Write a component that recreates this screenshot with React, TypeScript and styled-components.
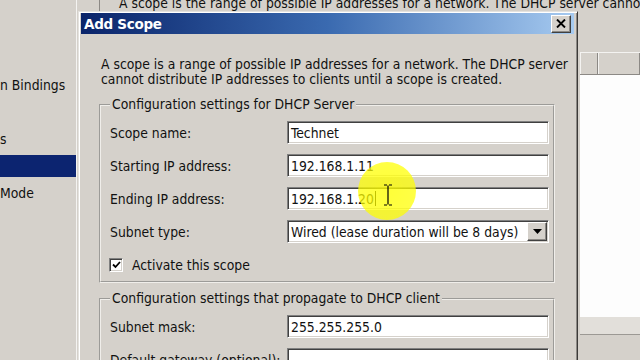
import React from 'react';
import styled, { createGlobalStyle } from 'styled-components';

const GlobalStyle = createGlobalStyle`
  html, body {
    margin: 0;
    padding: 0;
    background: #d5d1cb;
    overflow: hidden;
  }
  body {
    font-family: 'DejaVu Sans Condensed', 'DejaVu Sans', sans-serif;
    font-size: 13.8px;
    color: #111;
  }
`;

// Background console window
const Desktop = styled.div`
  position: relative;
  width: 640px;
  height: 360px;
  overflow: hidden;
  background: #d5d1cb;
`;

const BackWindow = styled.div`
  display: flex;
  width: 100%;
  height: 100%;
`;

const TreePane = styled.div`
  width: 77px;
  flex: none;
  padding-top: 74px;
  border-right: 1px solid #f4f3f1;
  box-sizing: border-box;
  display: flex;
  flex-direction: column;
  gap: 5px;
`;

const TreeItem = styled.div<{ $selected?: boolean }>`
  height: 22px;
  line-height: 22px;
  white-space: nowrap;
  overflow: hidden;
  background: ${(p) => (p.$selected ? '#0c2470' : 'transparent')};
  color: ${(p) => (p.$selected ? '#fff' : '#111')};
`;

const MainPane = styled.div`
  flex: 1;
  display: flex;
  flex-direction: column;
  min-width: 0;
`;

const TopStrip = styled.div`
  height: 11px;
  padding-left: 22px;
  display: flex;
  overflow: hidden;
`;

const TopText = styled.div`
  border-left: 1px solid #8c8985;
  padding-left: 19px;
  margin-top: -5px;
  line-height: 16px;
  white-space: nowrap;
`;

const ListPane = styled.div`
  align-self: flex-end;
  width: 60px;
  margin-top: 41px;
  flex: 1;
  display: flex;
  flex-direction: column;
`;

const ListHeader = styled.div`
  height: 21px;
  display: flex;
  background: #d5d1cb;
  border-top: 1px solid #f4f3f1;
  border-bottom: 1px solid #8c8985;
`;

const HeaderCell = styled.div<{ $w?: number }>`
  width: ${(p) => (p.$w ? `${p.$w}px` : 'auto')};
  flex: ${(p) => (p.$w ? 'none' : '1')};
  border-right: 1px solid #8c8985;
  border-left: 1px solid #f4f3f1;
`;

const ListBody = styled.div`
  height: 242px;
  background: #fdfdfd;
`;

const ListFooter = styled.div`
  height: 17px;
  background: #e2dfda;
  border-bottom: 1px solid #9c9994;
`;

// Dialog
const Dialog = styled.div`
  position: absolute;
  left: 78px;
  top: 11px;
  width: 500px;
  height: 370px;
  box-sizing: border-box;
  background: #d5d1cb;
  border-top: 1px solid #e4e2de;
  border-left: 1px solid #e4e2de;
  border-right: 1px solid #3c3a38;
  box-shadow: inset 1px 1px #ffffff, inset -1px 0 #8c8985;
  padding: 1px 3px 0 2px;
`;

const TitleBar = styled.div`
  height: 21px;
  display: flex;
  align-items: center;
  justify-content: space-between;
  padding: 0 3px 0 3px;
  background: linear-gradient(90deg, #0a246a 0%, #3a6ab0 50%, #a6caf0 100%);
`;

const Title = styled.div`
  color: #fff;
  font-family: 'DejaVu Sans', sans-serif;
  font-weight: bold;
  font-size: 13.5px;
  letter-spacing: -0.3px;
`;

const CloseButton = styled.div`
  width: 20px;
  height: 18px;
  box-sizing: border-box;
  background: #d5d1cb;
  border-top: 1px solid #fff;
  border-left: 1px solid #fff;
  border-right: 1px solid #404040;
  border-bottom: 1px solid #404040;
  box-shadow: inset -1px -1px #8c8985;
  display: flex;
  align-items: center;
  justify-content: center;
`;

const Body = styled.div`
  padding: 23px 0 0 18px;
`;

const Description = styled.div`
  padding-left: 2px;
  line-height: 15px;
  margin-bottom: 10px;
`;

const Group = styled.fieldset<{ $gap?: number }>`
  width: 456px;
  box-sizing: border-box;
  margin: ${(p) => p.$gap ?? 0}px 0 0 0;
  padding: 9px 7px 8px 8px;
  border: 2px groove #f0eeea;
  min-width: 0;
`;

const Legend = styled.legend`
  padding: 0 2px;
  margin-left: 1px;
  line-height: 15px;
`;

const FieldGrid = styled.div`
  display: grid;
  grid-template-columns: 178px 262px;
  row-gap: 10px;
  align-items: center;
`;

const Label = styled.div`
  padding-left: 1px;
`;

const TextBox = styled.div`
  height: 23px;
  box-sizing: border-box;
  background: #fff;
  border-top: 1px solid #808080;
  border-left: 1px solid #808080;
  border-right: 1px solid #fff;
  border-bottom: 1px solid #fff;
  box-shadow: inset 1px 1px #404040, inset -1px -1px #d5d1cb;
  padding: 0 3px;
  display: flex;
  align-items: center;
  white-space: nowrap;
  position: relative;
`;

const Caret = styled.span`
  display: inline-block;
  width: 1px;
  height: 15px;
  background: #000;
  margin-left: 1px;
`;

const DropButton = styled.div`
  position: absolute;
  right: 1px;
  top: 1px;
  width: 20px;
  height: 19px;
  box-sizing: border-box;
  background: #d5d1cb;
  border-top: 1px solid #fff;
  border-left: 1px solid #fff;
  border-right: 1px solid #404040;
  border-bottom: 1px solid #404040;
  box-shadow: inset -1px -1px #8c8985;
  display: flex;
  align-items: center;
  justify-content: center;
`;

const CheckRow = styled.div`
  display: flex;
  align-items: center;
  gap: 9px;
  margin-top: 14px;
`;

const CheckBox = styled.div`
  width: 14px;
  height: 14px;
  box-sizing: border-box;
  background: #fff;
  border-top: 1px solid #808080;
  border-left: 1px solid #808080;
  border-right: 1px solid #fff;
  border-bottom: 1px solid #fff;
  box-shadow: inset 1px 1px #404040, inset -1px -1px #d5d1cb;
  display: flex;
  align-items: center;
  justify-content: center;
`;

// Screen recorder cursor highlight
const Spotlight = styled.div`
  position: absolute;
  left: 358px;
  top: 162px;
  width: 58px;
  height: 58px;
  border-radius: 50%;
  background: radial-gradient(circle, rgba(255, 255, 0, 0.78) 0%, rgba(255, 255, 0, 0.72) 80%, rgba(255, 255, 0, 0) 100%);
  pointer-events: none;
`;

const IBeam = styled.svg`
  position: absolute;
  left: 383px;
  top: 184px;
  pointer-events: none;
`;

const App: React.FC = () => {
  return (
    <>
      <GlobalStyle />
      <Desktop>
        <BackWindow>
          <TreePane>
            <TreeItem>n Bindings</TreeItem>
            <TreeItem />
            <TreeItem>s</TreeItem>
            <TreeItem $selected />
            <TreeItem>Mode</TreeItem>
          </TreePane>
          <MainPane>
            <TopStrip>
              <TopText>A scope is the range of possible IP addresses for a network. The DHCP server cannot dis</TopText>
            </TopStrip>
            <ListPane>
              <ListHeader>
                <HeaderCell $w={16} />
                <HeaderCell />
              </ListHeader>
              <ListBody />
              <ListFooter />
            </ListPane>
          </MainPane>
        </BackWindow>

        <Dialog>
          <TitleBar>
            <Title>Add Scope</Title>
            <CloseButton>
              <svg width='10' height='9' viewBox='0 0 10 9'>
                <path d='M1 0.5 L9 8.5 M9 0.5 L1 8.5' stroke='#000' strokeWidth='1.9' />
              </svg>
            </CloseButton>
          </TitleBar>
          <Body>
            <Description>
              A scope is a range of possible IP addresses for a network. The DHCP server
              <br />
              cannot distribute IP addresses to clients until a scope is created.
            </Description>

            <Group>
              <Legend>Configuration settings for DHCP Server</Legend>
              <FieldGrid>
                <Label>Scope name:</Label>
                <TextBox>Technet</TextBox>
                <Label>Starting IP address:</Label>
                <TextBox>192.168.1.11</TextBox>
                <Label>Ending IP address:</Label>
                <TextBox>
                  192.168.1.20
                  <Caret />
                </TextBox>
                <Label>Subnet type:</Label>
                <TextBox>
                  Wired (lease duration will be 8 days)
                  <DropButton>
                    <svg width='9' height='5' viewBox='0 0 9 5'>
                      <path d='M0 0 H9 L4.5 5 Z' fill='#000' />
                    </svg>
                  </DropButton>
                </TextBox>
              </FieldGrid>
              <CheckRow>
                <CheckBox>
                  <svg width='9' height='8' viewBox='0 0 9 8'>
                    <path d='M1 3.5 L3.5 6 L8 1' stroke='#000' strokeWidth='1.8' fill='none' />
                  </svg>
                </CheckBox>
                <span>Activate this scope</span>
              </CheckRow>
            </Group>

            <Group $gap={8}>
              <Legend>Configuration settings that propagate to DHCP client</Legend>
              <FieldGrid>
                <Label>Subnet mask:</Label>
                <TextBox>255.255.255.0</TextBox>
                <Label>Default gateway (optional):</Label>
                <TextBox />
              </FieldGrid>
            </Group>
          </Body>
        </Dialog>

        <Spotlight />
        <IBeam width='10' height='22' viewBox='0 0 10 22'>
          <path d='M1 1 H4 M6 1 H9 M5 1.5 V20.5 M1 21 H4 M6 21 H9' stroke='#000' strokeWidth='1.2' fill='none' />
        </IBeam>
      </Desktop>
    </>
  );
};

export default App;
